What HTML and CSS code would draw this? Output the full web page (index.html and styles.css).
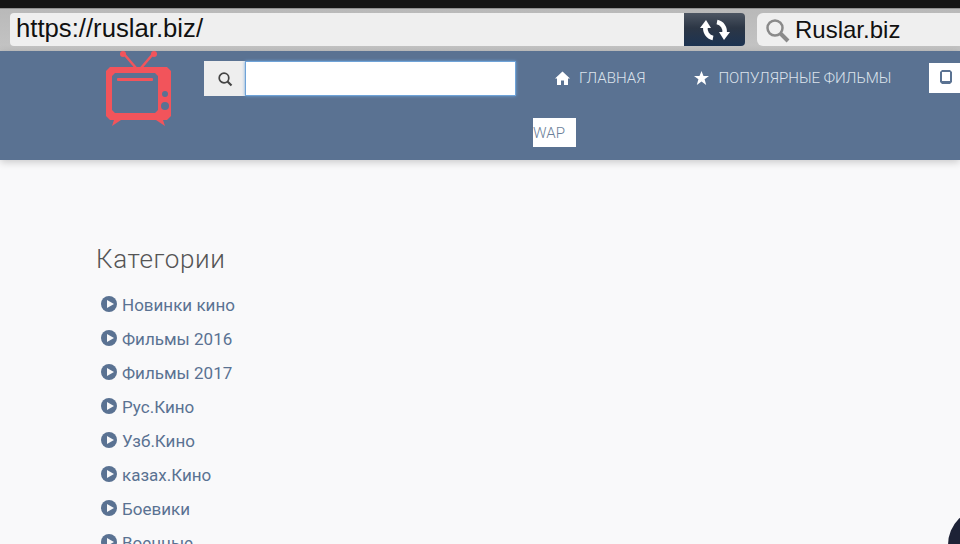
FILE: index.html
```html
<!DOCTYPE html>
<html>
  <head>
    <title>Ruslar.biz</title>
    <link rel="stylesheet" href="styles.css">
  </head>
  <body>
    <div class="status-bar"></div>

    <div class="toolbar">
      <div class="url-box">https://ruslar.biz/</div>
      <div class="reload-button">
        <svg width="30" height="30" viewBox="0 0 30 30">
          <path d="M17 7A9.5 9.5 0 0 1 24.5 18" fill="none" stroke="#fff" stroke-width="4.5"/>
          <path d="M13 23A9.5 9.5 0 0 1 5.5 12" fill="none" stroke="#fff" stroke-width="4.5"/>
          <path d="M19 17H30L24 25Z" fill="#fff"/>
          <path d="M0 13H11L6 5Z" fill="#fff"/>
        </svg>
      </div>
      <div class="find-box">
        <svg width="26" height="26" viewBox="0 0 26 26">
          <circle cx="11" cy="11" r="7.5" fill="#efefef" stroke="#8a8a8a" stroke-width="2.5"/>
          <path d="M16.5 16.5L24 24" stroke="#8a8a8a" stroke-width="4"/>
        </svg>
        <span>Ruslar.biz</span>
      </div>
    </div>

    <div class="navbar">
      <a class="logo">
        <svg width="67" height="76" viewBox="0 0 67 76">
          <path d="M31 17L19 3M36 17L48 3" stroke="#f2545b" stroke-width="2.5"/>
          <circle cx="18" cy="3" r="3" fill="#f2545b"/>
          <circle cx="49" cy="3" r="3" fill="#f2545b"/>
          <path fill="#f2545b" fill-rule="evenodd" d="M5 16H62L66 20V65L62 69H58L60 75L51 69H16L7 75L9 69H5L1 65V20ZM10 22L7 25V59L10 62H50L53 59V25L50 22Z"/>
          <rect x="12" y="27" width="36" height="3" rx="1" fill="#f2545b"/>
          <circle cx="60" cy="43" r="3" fill="#5a7292"/>
          <circle cx="60" cy="55" r="4" fill="#5a7292"/>
        </svg>
      </a>

      <div class="search-group">
        <div class="search-addon">
          <svg width="16" height="16" viewBox="0 0 16 16">
            <circle cx="7" cy="7" r="4.8" fill="none" stroke="#444" stroke-width="1.7"/>
            <path d="M10.5 10.5L14.5 14.5" stroke="#444" stroke-width="2.2"/>
          </svg>
        </div>
        <div class="search-input"></div>
      </div>

      <ul class="menu">
        <li class="menu-item">
          <svg width="15" height="14" viewBox="0 0 15 14">
            <path d="M7.5 0.5L15 7.5H13V14H9V9.5H6V14H2V7.5H0Z" fill="#fff"/>
          </svg>
          ГЛАВНАЯ
        </li>
        <li class="menu-item">
          <svg width="15" height="14" viewBox="0 0 15 14">
            <path d="M7.5 0L9.5 5H15L10.6 8.3L12.2 14L7.5 10.5L2.8 14L4.4 8.3L0 5H5.5Z" fill="#fff"/>
          </svg>
          ПОПУЛЯРНЫЕ ФИЛЬМЫ
        </li>
        <li class="menu-item tablet">
          <svg width="12" height="14" viewBox="0 0 12 14">
            <path d="M2 0H10L12 2V12L10 14H2L0 12V2ZM2 2V11H10V2Z" fill="#5a7292" fill-rule="evenodd"/>
          </svg>
        </li>
        <li class="menu-item wap">WAP</li>
      </ul>
    </div>

    <div class="content">
      <h3 class="section-title">Категории</h3>
      <ul class="categories">
        <li><span class="play"></span>Новинки кино</li>
        <li><span class="play"></span>Фильмы 2016</li>
        <li><span class="play"></span>Фильмы 2017</li>
        <li><span class="play"></span>Рус.Кино</li>
        <li><span class="play"></span>Узб.Кино</li>
        <li><span class="play"></span>казах.Кино</li>
        <li><span class="play"></span>Боевики</li>
        <li><span class="play"></span>Военные</li>
      </ul>
    </div>

    <div class="corner-button"></div>
  </body>
</html>
```

FILE: styles.css
```css
html, body {
  margin: 0;
  padding: 0;
  height: 100%;
  overflow: hidden;
}
body {
  background-color: #f9f9fa;
  font-family: "Liberation Sans", sans-serif;
}
ul {
  list-style: none;
  margin: 0;
  padding: 0;
}

.status-bar {
  height: 8px;
  background-color: #141414;
}

.toolbar {
  display: flex;
  height: 43px;
  box-sizing: border-box;
  padding: 4px 0 4px 10px;
  background: linear-gradient(#b9b9b9, #c4c4c4);
  border-top: 1px solid #8f8f8f;
}
.url-box {
  width: 674px;
  height: 33px;
  box-sizing: border-box;
  padding-left: 6px;
  background-color: #efefef;
  border-radius: 4px 0 0 4px;
  color: #111;
  font-size: 25.7px;
  line-height: 31px;
}
.reload-button {
  display: flex;
  width: 61px;
  height: 33px;
  align-items: center;
  justify-content: center;
  background: linear-gradient(#4d5663, #2c3645 45%, #1c3352);
  border-radius: 0 4px 4px 0;
}
.find-box {
  display: flex;
  flex: 1;
  height: 33px;
  margin-left: 12px;
  padding-left: 7px;
  align-items: center;
  gap: 5px;
  background-color: #efefef;
  border-radius: 6px 0 0 6px;
  color: #111;
  font-size: 24px;
}

.navbar {
  display: flex;
  height: 109px;
  padding-left: 105px;
  background-color: #5a7292;
  box-shadow: 0 2px 8px rgba(0, 0, 0, 0.2);
}
.logo {
  display: block;
  width: 67px;
  height: 76px;
}
.search-group {
  display: flex;
  height: 35px;
  margin: 10px 0 0 32px;
}
.search-addon {
  display: flex;
  width: 41px;
  align-items: center;
  justify-content: center;
  background-color: #eeeeee;
}
.search-input {
  width: 269px;
  background-color: #fff;
  border: 1px solid #6fa3d8;
  box-shadow: 0 0 3px #6fa3d8;
}

.menu {
  display: flex;
  flex-wrap: wrap;
  flex: 1;
  min-width: 0;
  margin: 0 -10px 0 17px;
  padding-top: 12px;
  row-gap: 25px;
  align-content: flex-start;
}
.menu-item {
  display: flex;
  height: 30px;
  padding: 0 22px;
  align-items: center;
  gap: 9px;
  color: #dce3ec;
  font-family: "Roboto", sans-serif;
  font-size: 15.1px;
  font-weight: 300;
}
.menu-item + .menu-item {
  margin-left: 5px;
}
.menu-item.tablet {
  width: 31px;
  box-sizing: border-box;
  margin-left: 16px;
  padding: 0 0 2px 11px;
  background-color: #fff;
}
.menu-item.wap {
  width: 43px;
  height: 29px;
  box-sizing: border-box;
  margin-left: 0;
  padding: 0;
  background-color: #fff;
  color: #6b7f99;
}

.content {
  padding: 81px 0 0 96px;
}
.section-title {
  margin: 0 0 12px 0;
  color: #555;
  font-family: "Roboto", sans-serif;
  font-size: 26px;
  font-weight: 300;
  line-height: 36px;
  letter-spacing: 0.6px;
}
.categories li {
  display: flex;
  height: 34px;
  padding-left: 5px;
  color: #5a7292;
  font-family: "Roboto", sans-serif;
  font-size: 17px;
  line-height: 32px;
}
.play {
  position: relative;
  flex: none;
  width: 16px;
  height: 16px;
  margin: 7px 5px 0 0;
  border-radius: 50%;
  background-color: #5a7292;
}
.play::after {
  content: "";
  position: absolute;
  left: 6px;
  top: 4px;
  border-left: 7px solid #f8f8f9;
  border-top: 4px solid transparent;
  border-bottom: 4px solid transparent;
}

.corner-button {
  position: fixed;
  left: 948px;
  top: 508px;
  width: 74px;
  height: 74px;
  border-radius: 50%;
  background-color: #1d2236;
}
```
